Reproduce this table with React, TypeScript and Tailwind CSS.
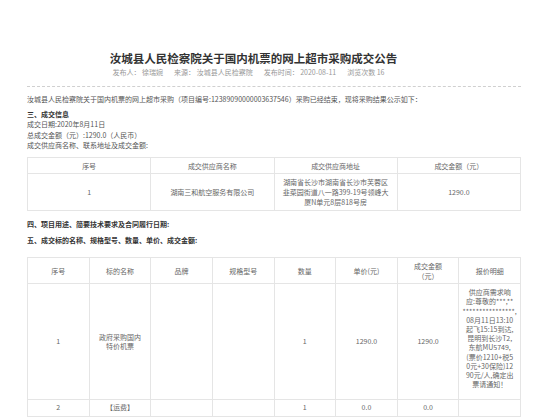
const quoteLines = [
  '供应商需求响',
  '应:尊敬的***,**',
  '****************,',
  '08月11日13:10',
  '起飞15:15到达,',
  '昆明到长沙T2,',
  '东航MU5749,',
  '(票价1210+税5',
  '0元+30保险)12',
  '90元/人,确定出',
  '票请通知！',
];

const App = () => {
  return (
    <div className="w-[558px] h-[418px] overflow-hidden bg-white px-[27px] pt-[49px] text-[7px] text-[#555] font-['Noto_Sans_CJK_SC','Noto_Sans',sans-serif]">
      <div className="w-[494px]">
        {/* 标题 */}
        <div className="mr-[41px] text-center">
          <div className="text-[11.5px] leading-[18px] font-bold text-[#333] whitespace-nowrap">
            汝城县人民检察院关于国内机票的网上超市采购成交公告
          </div>
          <div className="flex justify-center gap-[11px] pr-[10px] leading-[10px] text-[#999]">
            <span>发布人： 徐瑞婉</span>
            <span>来源： 汝城县人民检察院</span>
            <span>发布时间： 2020-08-11</span>
            <span>浏览次数 16</span>
          </div>
        </div>
        <div className="mt-[9px] border-t border-dashed border-[#d0d0d0]" />

        <div className="mt-[7px] leading-[10.2px]">
          <p>
            汝城县人民检察院关于国内机票的网上超市采购（项目编号:12389090000003637546）采购已经结束，现将采购结果公示如下：
          </p>
          <p className="mt-[5px] font-bold text-[#333]">三、成交信息</p>
          <p>成交日期:2020年8月11日</p>
          <p>总成交金额（元）:1290.0（人民币）</p>
          <p>成交供应商名称、联系地址及成交金额:</p>
        </div>

        {/* 成交供应商 */}
        <table className="mt-[7px] w-full table-fixed border-collapse text-center text-[#666] leading-[10.3px]">
          <thead>
            <tr>
              <th className="border border-[#e5e5e5] py-[2.5px] font-normal">序号</th>
              <th className="border border-[#e5e5e5] py-[2.5px] font-normal">成交供应商名称</th>
              <th className="border border-[#e5e5e5] py-[2.5px] font-normal">成交供应商地址</th>
              <th className="border border-[#e5e5e5] py-[2.5px] font-normal">成交金额（元）</th>
            </tr>
          </thead>
          <tbody>
            <tr>
              <td className="border border-[#e5e5e5] py-[2.5px]">1</td>
              <td className="border border-[#e5e5e5] py-[2.5px]">湖南三和航空服务有限公司</td>
              <td className="border border-[#e5e5e5] py-[2.5px] whitespace-nowrap">
                湖南省长沙市湖南省长沙市芙蓉区
                <br />
                韭菜园街道八一路399-19号领峰大
                <br />
                厦N单元8层818号房
              </td>
              <td className="border border-[#e5e5e5] py-[2.5px]">1290.0</td>
            </tr>
          </tbody>
        </table>

        <div className="leading-[10.2px] font-bold text-[#333]">
          <p className="mt-[7.5px]">四、项目用途、简要技术要求及合同履行日期:</p>
          <p className="mt-[6px]">五、成交标的名称、规格型号、数量、单价、成交金额:</p>
        </div>

        {/* 成交标的 */}
        <table className="mt-[12px] w-full table-fixed border-collapse text-center text-[#666] leading-[9.2px]">
          <thead>
            <tr className="leading-[10px]">
              <th className="border border-[#e5e5e5] py-[2.5px] font-normal">序号</th>
              <th className="border border-[#e5e5e5] py-[2.5px] font-normal">标的名称</th>
              <th className="border border-[#e5e5e5] py-[2.5px] font-normal">品牌</th>
              <th className="border border-[#e5e5e5] py-[2.5px] font-normal">规格型号</th>
              <th className="border border-[#e5e5e5] py-[2.5px] font-normal">数量</th>
              <th className="border border-[#e5e5e5] py-[2.5px] font-normal">单价(元)</th>
              <th className="border border-[#e5e5e5] py-[2.5px] font-normal">
                成交金额
                <br />
                （元）
              </th>
              <th className="border border-[#e5e5e5] py-[2.5px] font-normal">报价明细</th>
            </tr>
          </thead>
          <tbody>
            <tr>
              <td className="border border-[#e5e5e5]">1</td>
              <td className="border border-[#e5e5e5]">
                政府采购国内
                <br />
                特价机票
              </td>
              <td className="border border-[#e5e5e5]"></td>
              <td className="border border-[#e5e5e5]"></td>
              <td className="border border-[#e5e5e5]">1</td>
              <td className="border border-[#e5e5e5]">1290.0</td>
              <td className="border border-[#e5e5e5]">1290.0</td>
              <td className="border border-[#e5e5e5] pt-[4px] pb-[10px] whitespace-nowrap">
                {quoteLines.map((line) => (
                  <div key={line}>{line}</div>
                ))}
              </td>
            </tr>
            <tr>
              <td className="border border-[#e5e5e5] py-[3px]">2</td>
              <td className="border border-[#e5e5e5] py-[3px]">【运费】</td>
              <td className="border border-[#e5e5e5] py-[3px]"></td>
              <td className="border border-[#e5e5e5] py-[3px]"></td>
              <td className="border border-[#e5e5e5] py-[3px]">1</td>
              <td className="border border-[#e5e5e5] py-[3px]">0.0</td>
              <td className="border border-[#e5e5e5] py-[3px]">0.0</td>
              <td className="border border-[#e5e5e5] py-[3px]"></td>
            </tr>
          </tbody>
        </table>
      </div>
    </div>
  );
};

export default App;
